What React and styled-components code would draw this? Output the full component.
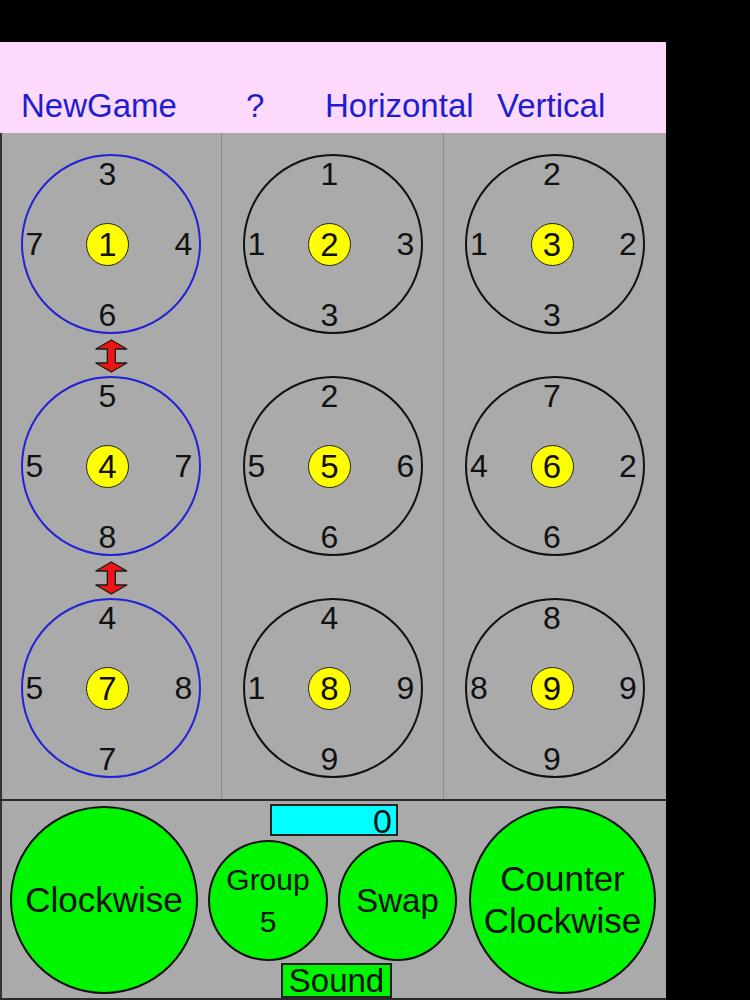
import styled, { createGlobalStyle } from "styled-components";

const groups = [
  { top: 3, left: 7, center: 1, right: 4, bottom: 6 },
  { top: 1, left: 1, center: 2, right: 3, bottom: 3 },
  { top: 2, left: 1, center: 3, right: 2, bottom: 3 },
  { top: 5, left: 5, center: 4, right: 7, bottom: 8 },
  { top: 2, left: 5, center: 5, right: 6, bottom: 6 },
  { top: 7, left: 4, center: 6, right: 2, bottom: 6 },
  { top: 4, left: 5, center: 7, right: 8, bottom: 7 },
  { top: 4, left: 1, center: 8, right: 9, bottom: 9 },
  { top: 8, left: 8, center: 9, right: 9, bottom: 9 },
];

const selectedColumn = 0;

function SwapArrow() {
  return (
    <ArrowBox>
      <svg width="33" height="34" viewBox="0 0 33 34">
        <polygon
          points="16.5,1 32,10 20.5,10 20.5,24 32,24 16.5,33 1,24 12.5,24 12.5,10 1,10"
          fill="#f01414"
          stroke="#1a1a1a"
          strokeWidth="1.3"
          strokeLinejoin="round"
        />
      </svg>
    </ArrowBox>
  );
}

function App() {
  return (
    <Screen>
      <GlobalStyle />
      <Header>
        <HeaderButton>NewGame</HeaderButton>
        <HeaderButton>?</HeaderButton>
        <HeaderButton>Horizontal</HeaderButton>
        <HeaderButton>Vertical</HeaderButton>
      </Header>
      <Board>
        {groups.map((g, i) => {
          const col = i % 3;
          const row = Math.floor(i / 3);
          const selected = col === selectedColumn;
          return (
            <Cell key={i} $last={col === 2}>
              <Ring $selected={selected}>
                <Label $area="top">{g.top}</Label>
                <Label $area="left">{g.left}</Label>
                <Core>{g.center}</Core>
                <Label $area="right">{g.right}</Label>
                <Label $area="bottom">{g.bottom}</Label>
              </Ring>
              {selected && row < 2 && <SwapArrow />}
            </Cell>
          );
        })}
      </Board>
      <Controls>
        <RoundButton $w={188} $h={188} $size={35}>
          Clockwise
        </RoundButton>
        <Middle>
          <Score>0</Score>
          <SmallRow>
            <RoundButton $w={120} $h={121} $size={30}>
              <span>Group</span>
              <span>5</span>
            </RoundButton>
            <RoundButton $w={119} $h={121} $size={33}>
              Swap
            </RoundButton>
          </SmallRow>
          <Sound>Sound</Sound>
        </Middle>
        <RoundButton $w={187} $h={188} $size={35}>
          <span>Counter</span>
          <span>Clockwise</span>
        </RoundButton>
      </Controls>
    </Screen>
  );
}

const GlobalStyle = createGlobalStyle`
  html, body {
    margin: 0;
    padding: 0;
    background: #000;
  }
  body {
    font-family: "Liberation Sans", Arial, sans-serif;
  }
`;

const Screen = styled.div`
  width: 666px;
  margin-top: 42px;
`;

const Header = styled.header`
  height: 91px;
  box-sizing: border-box;
  background: #fdd9fd;
  display: grid;
  grid-template-columns: 225px 79px 172px auto;
  align-items: end;
  padding: 0 0 11px 21px;
`;

const HeaderButton = styled.button`
  justify-self: start;
  background: none;
  border: 0;
  padding: 0;
  font-family: inherit;
  font-size: 33px;
  line-height: 33px;
  color: #1e1ecf;
  cursor: pointer;
`;

const Board = styled.div`
  display: grid;
  grid-template-columns: repeat(3, 222px);
  grid-auto-rows: 222px;
  background: #aaaaaa;
  box-shadow: inset 2px 0 0 #333;
`;

const Cell = styled.div`
  position: relative;
  box-sizing: border-box;
  display: flex;
  align-items: center;
  justify-content: center;
  border-right: ${(p) => (p.$last ? "none" : "1px solid #8a8a8a")};
`;

const Ring = styled.div`
  box-sizing: border-box;
  width: 180px;
  height: 180px;
  border-radius: 50%;
  border: 2px solid ${(p) => (p.$selected ? "#2222d4" : "#111")};
  display: grid;
  grid-template-columns: 24px 122px 1fr;
  grid-template-rows: 35px 106px 1fr;
  grid-template-areas:
    ". top ."
    "left mid right"
    ". bottom .";
  place-items: center;
`;

const Label = styled.span`
  grid-area: ${(p) => p.$area};
  font-size: 32px;
  line-height: 1;
  color: #111;
`;

const Core = styled.span`
  grid-area: mid;
  box-sizing: border-box;
  width: 43px;
  height: 43px;
  border-radius: 50%;
  border: 1px solid #222;
  background: #ffff00;
  display: flex;
  align-items: center;
  justify-content: center;
  font-size: 33px;
  line-height: 1;
  color: #111;
`;

const ArrowBox = styled.div`
  position: absolute;
  left: 50%;
  bottom: -18px;
  transform: translateX(-49%);
  width: 33px;
  height: 34px;
  z-index: 1;
  svg {
    display: block;
  }
`;

const Controls = styled.div`
  height: 197px;
  display: flex;
  align-items: center;
  padding: 0 10px;
  background: #aaaaaa;
  border-top: 2px solid #2a2a2a;
  border-bottom: 2px solid #2a2a2a;
  box-shadow: inset 2px 0 0 #333;
`;

const RoundButton = styled.button`
  flex: none;
  box-sizing: border-box;
  width: ${(p) => p.$w}px;
  height: ${(p) => p.$h}px;
  padding: 0;
  border-radius: 50%;
  border: 2px solid #111;
  background: #00f500;
  display: flex;
  flex-direction: column;
  align-items: center;
  justify-content: center;
  font-family: inherit;
  font-size: ${(p) => p.$size}px;
  line-height: 42px;
  color: #111;
  cursor: pointer;
`;

const Middle = styled.div`
  flex: none;
  align-self: stretch;
  width: 249px;
  margin: 0 12px 0 10px;
  padding-top: 3px;
  display: flex;
  flex-direction: column;
  align-items: center;
`;

const Score = styled.div`
  box-sizing: border-box;
  width: 128px;
  height: 32px;
  margin-left: 3px;
  padding-right: 4px;
  background: #00ffff;
  border: 2px solid #222;
  text-align: right;
  font-size: 34px;
  line-height: 30px;
  color: #111;
`;

const SmallRow = styled.div`
  display: flex;
  gap: 10px;
  margin-top: 4px;
`;

const Sound = styled.button`
  box-sizing: border-box;
  width: 111px;
  height: 35px;
  margin: 2px 0 0 8px;
  padding: 0;
  background: #00f500;
  border: 2px solid #222;
  font-family: inherit;
  font-size: 33px;
  line-height: 31px;
  color: #111;
  cursor: pointer;
`;

export default App;
